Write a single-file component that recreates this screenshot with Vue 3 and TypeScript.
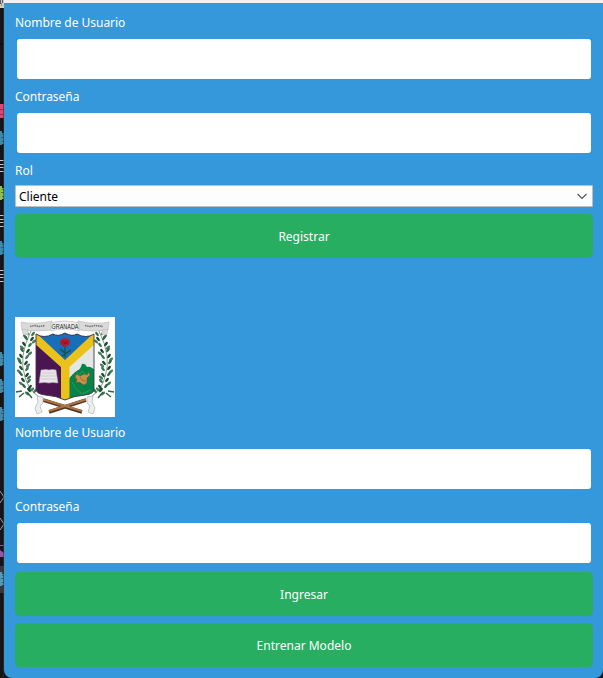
<script setup lang="ts">
import { ref } from 'vue'

interface Leaf { x: number; y: number; a: number; c: string }

const registerUser = ref('')
const registerPassword = ref('')
const role = ref('Cliente')
const loginUser = ref('')
const loginPassword = ref('')

const leaves: Leaf[] = []
const stem = [[15, 16], [14, 21], [12, 27], [10, 33], [9, 39], [8, 45], [9, 51], [9, 57], [11, 63], [12, 69], [17, 73]]
stem.forEach(([x, y], i) => {
  leaves.push({ x: x - 3, y, a: -38, c: i % 2 ? '#2f6847' : '#174d32' })
  leaves.push({ x: x + 3, y: y + 1, a: 38, c: i % 2 ? '#174d32' : '#3c7653' })
  leaves.push({ x: x + (i % 2 ? 5 : -5), y: y + 3.5, a: i % 2 ? 50 : -50, c: '#4c7b5c' })
})

const bars = [160, 215, 270]
const databases = [
  { y: 131, c: '#388bad' }, { y: 186, c: '#8dc149' }, { y: 241, c: '#388bad' },
  { y: 352, c: '#4389a8' }, { y: 379, c: '#4389a8' }, { y: 407, c: '#4389a8' },
  { y: 572, c: '#519aba' },
]
</script>

<template>
  <div class="screen">
    <svg class="edge" width="4" height="678" viewBox="0 0 4 678" aria-hidden="true">
      <rect width="4" height="678" fill="#151515" />
      <rect width="4" height="8" fill="#c9cfd2" />
      <path d="M0 0h1v4H0zM2 0h1v3H2z" fill="#3b647c" />
      <path d="M1 3h1v3H1z" fill="#b88540" />
      <path d="M0 44h4" stroke="#080808" />
      <rect y="566" width="4" height="27" fill="#37373d" />
      <rect y="104" width="4" height="14" fill="#e04472" />
      <path d="M0 109.500h4M0 114.500h4" stroke="#a22a50" />
      <g v-for="d in databases" :key="d.y">
        <path :d="`M0 ${d.y}h2v2h2v11H2v1H0z`" :fill="d.c" />
        <path :d="`M2 ${d.y + 3.5}h2M1 ${d.y + 6.5}h3M2 ${d.y + 10.5}h2`" stroke="#294b58" stroke-opacity=".7" />
      </g>
      <path v-for="y in bars" :key="y" :d="`M0 ${y + .5}h4M0 ${y + 4.5}h4M0 ${y + 7.5}h4M0 ${y + 11.5}h4`" stroke="#c5c8c6" />
      <path d="M0 491l4 6-4 6M0 518l4 6-4 6" fill="none" stroke="#a0a0a0" />
      <path d="M0 545.500h4" stroke="#9b55a5" />
      <path d="M0 550l4 3v4H0z" fill="#9b55a5" />
      <path d="M3.500 8v670" stroke="#363636" stroke-opacity=".6" />
    </svg>

    <main class="window">
      <div class="titlebar"></div>
      <div class="panel">
        <form class="form" @submit.prevent>
          <label for="register-user">Nombre de Usuario</label>
          <input id="register-user" v-model="registerUser" type="text" />
          <label for="register-password">Contraseña</label>
          <input id="register-password" v-model="registerPassword" type="password" />
          <label for="role">Rol</label>
          <div class="select">
            <select id="role" v-model="role"><option>Cliente</option></select>
            <svg width="11" height="7" viewBox="0 0 11 7" aria-hidden="true"><path d="M1.500 1l4.500 4.500L10.500 1" fill="none" stroke="#505050" stroke-width="1.100" /></svg>
          </div>
          <button class="register" type="submit">Registrar</button>
        </form>

        <svg class="crest" width="100" height="100" viewBox="0 0 100 100" role="img" aria-label="Granada">
          <defs>
            <clipPath id="shield"><path d="M21 17Q29 22 38 17Q43 20 50 16Q57 20 62 17Q71 22 79 17V72Q79 77 70 78Q58 79 50 83Q42 79 30 78Q21 77 21 72Z" /></clipPath>
            <g id="branch">
              <path d="M16 14Q3 40 10 60Q13 72 24 80" fill="none" stroke="#55735a" stroke-width=".7" />
              <ellipse v-for="(l, i) in leaves" :key="i" :cx="l.x" :cy="l.y" rx="1.300" ry="2.600" :fill="l.c" :transform="`rotate(${l.a} ${l.x} ${l.y})`" />
              <path d="M1 75l6-1m-3 6l5-4m3-1l5 6" stroke="#326548" stroke-width="1.500" />
            </g>
          </defs>
          <rect width="100" height="100" fill="#fff" />
          <use href="#branch" />
          <use href="#branch" transform="translate(100 0) scale(-1 1)" />
          <g fill="#d9dad9" stroke="#b6b9b7" stroke-width=".6">
            <path d="M6 5Q20 8 37 4L37 13Q21 15 7 13Z" />
            <path d="M94 5Q80 8 63 4L63 13Q79 15 93 13Z" />
            <path d="M36 6Q50 2 64 6L64 14Q50 10 36 14Z" fill="#eceeec" />
            <path d="M7 12l6 1v5l-5-1zM93 12l-6 1v5l5-1z" />
          </g>
          <g fill="#252525" font-family="Liberation Sans, sans-serif" text-anchor="middle">
            <text x="50" y="12" font-size="7" textLength="27" lengthAdjust="spacingAndGlyphs">GRANADA</text>
          </g>
          <path d="M15 9.500l5-1 4 1 6-1M70 8.500l5 1 5-1 8 1" fill="none" stroke="#777" stroke-width="1.600" stroke-dasharray="1.500 .7" />
          <g clip-path="url(#shield)">
            <rect x="20" y="14" width="60" height="71" fill="#4a1550" />
            <path d="M20 14h60v12L50 54 20 26z" fill="#176fb9" />
            <path d="M80 16v54L52 82V44z" fill="#e3e6e4" />
            <path d="M53 63q5-7 10-10q2 0 4-6q3-1 5 3q3-1 8 3v26l-27 6z" fill="#078347" />
            <path d="M61 54l3 5 3-5 3 3 5 2M57 65l4 7 6 5 9-4" fill="none" stroke="#35a46a" stroke-width=".7" />
            <path d="M19 14L50 43 81 14V26L54.500 50V86H46V50L19 26z" fill="#eac21b" />
          </g>
          <path d="M21 17Q29 22 38 17Q43 20 50 16Q57 20 62 17Q71 22 79 17V72Q79 77 70 78Q58 79 50 83Q42 79 30 78Q21 77 21 72Z" fill="none" stroke="#43364b" stroke-width=".9" />
          <path d="M50 28v12m0-4l-5-4m5 5l6-4m-6 4l-3 2" stroke="#195337" stroke-width="1.300" fill="none" />
          <path d="M47 22l3-1 4 1 1 4-2 3-4 1-4-3v-4z" fill="#b91d34" />
          <path d="M46 25l4 2 4-3M48 23l2 3 2-3M48 29l2-3 4 1" fill="none" stroke="#6f1a2c" stroke-width=".7" />
          <path d="M26 53q6-1 8 0q3-1 7 0l2 13q-6-1-9 0q-4-1-10 0z" fill="#e9e5e9" stroke="#aaa0b0" stroke-width=".6" />
          <path d="M27 56h13m-14 3h15m-15 3h16" stroke="#c4bdc8" stroke-width=".7" />
          <path d="M61 57l4 2 4-2 3 1 2-3 1 3-3 3v5l-3 2-5-3-3 1 1-4-2-1z" fill="#c6924a" stroke="#6e592b" stroke-width=".6" />
          <path d="M65 60l2 3 4 1" fill="none" stroke="#8b632d" stroke-width=".7" />
          <path d="M28 83L67 95M71 83L34 95" stroke="#533426" stroke-width="3.600" />
          <path d="M28 82.500L67 94M71 82.500L34 94" stroke="#ad7546" stroke-width="2" />
          <g fill="#eceeee" stroke="#b0b4b4" stroke-width=".7">
            <path d="M22 79l6 1v6l-3 3 2 6-5 2-2-6 3-6zM78 79l-6 1v6l3 3-2 6 5 2 2-6-3-6z" />
          </g>
        </svg>

        <form class="form login" @submit.prevent>
          <label for="login-user">Nombre de Usuario</label>
          <input id="login-user" v-model="loginUser" type="text" />
          <label for="login-password">Contraseña</label>
          <input id="login-password" v-model="loginPassword" type="password" />
          <button class="enter" type="submit">Ingresar</button>
          <button class="train" type="button">Entrenar Modelo</button>
        </form>
      </div>
    </main>
  </div>
</template>

<style>
body { margin: 0; background: #151515; overflow: hidden; }
</style>

<style scoped>
.screen { display: flex; width: 603px; height: 678px; background: #151515; font: 12px/16px "Noto Sans", sans-serif; }
.edge { flex: none; }
.window { flex: 1; height: 678px; }
.titlebar { height: 3px; background: #f0f0f5; }
.panel { box-sizing: border-box; height: 674.5px; padding: 12px 10px 0 11px; background: #3498db; border-radius: 0 0 8px 8px; }
.form { display: flex; flex-direction: column; }
label { height: 16px; margin-bottom: 8px; color: #fff; letter-spacing: -0.03px; white-space: nowrap; }
input { box-sizing: border-box; height: 40px; margin: 0 2px 10px; padding: 0 10px; border: 0; border-radius: 3px; background: #fff; outline: 0; font: inherit; }
label[for="role"] { margin-bottom: 6px; }
.select { display: flex; align-items: center; box-sizing: border-box; height: 22px; padding: 0 5px 0 3px; border: 1px solid #bfbfbf; border-radius: 1px; background: #fdfdfd; }
select { flex: 1; height: 20px; padding: 2px 0 0; border: 0; appearance: none; background: transparent; color: #000; font: inherit; outline: 0; }
button { height: 44px; padding: 2px 0 0; border: 0; border-radius: 5px; background: #27ae60; color: #fff; font: inherit; }
.register { margin-top: 7px; }
.crest { display: block; margin: 59px 0 8px; }
.enter { margin-top: -1px; }
.train { margin-top: 7px; }
</style>
